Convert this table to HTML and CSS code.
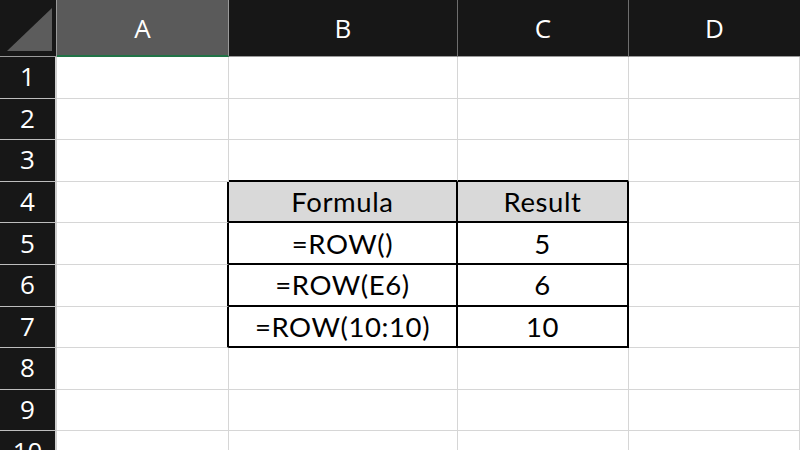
FILE: index.html
```html
<!DOCTYPE html>
<html>
<head>
<meta charset="utf-8">
<link rel="stylesheet" href="styles.css">
</head>
<body>
<div class="sheet">
  <div class="corner"><svg width="56" height="56" viewBox="0 0 56 56"><polygon points="7,51 52,8 52,51" fill="#5c5c5c"/></svg></div>
  <div class="ch sel">A</div>
  <div class="ch">B</div>
  <div class="ch">C</div>
  <div class="ch last">D</div>

  <div class="rh">1</div><div class="c"></div><div class="c"></div><div class="c"></div><div class="c"></div>
  <div class="rh">2</div><div class="c"></div><div class="c"></div><div class="c"></div><div class="c"></div>
  <div class="rh">3</div><div class="c"></div><div class="c tt"></div><div class="c tt"></div><div class="c"></div>
  <div class="rh">4</div><div class="c tl"></div><div class="c tb th">Formula</div><div class="c tb th">Result</div><div class="c"></div>
  <div class="rh">5</div><div class="c tl"></div><div class="c tb">=ROW()</div><div class="c tb">5</div><div class="c"></div>
  <div class="rh">6</div><div class="c tl"></div><div class="c tb">=ROW(E6)</div><div class="c tb">6</div><div class="c"></div>
  <div class="rh">7</div><div class="c tl"></div><div class="c tb">=ROW(10:10)</div><div class="c tb">10</div><div class="c"></div>
  <div class="rh">8</div><div class="c"></div><div class="c"></div><div class="c"></div><div class="c"></div>
  <div class="rh">9</div><div class="c"></div><div class="c"></div><div class="c"></div><div class="c"></div>
  <div class="rh">10</div><div class="c"></div><div class="c"></div><div class="c"></div><div class="c"></div>
</div>
</body>
</html>
```
FILE: styles.css
```css
html, body {
  margin: 0;
  padding: 0;
  background: #ffffff;
  overflow: hidden;
}
.sheet {
  width: 800px;
  height: 450px;
  display: grid;
  grid-template-columns: 57px 172px 229px 171px 171px;
  grid-template-rows: 57px repeat(10, 41.6px);
  overflow: hidden;
}
.sheet > div {
  box-sizing: border-box;
}
.corner {
  background: #171717;
  border-right: 1px solid #9a9a9a;
  border-bottom: 1px solid #9a9a9a;
}
.corner svg {
  display: block;
}
.ch {
  background: #171717;
  color: #ffffff;
  font-family: "Open Sans", sans-serif;
  font-size: 26px;
  display: flex;
  align-items: center;
  justify-content: center;
  border-right: 1px solid #6e6e6e;
  border-bottom: 1px solid #9a9a9a;
}
.ch.sel {
  background: #5a5a5a;
  border-bottom: 2px solid #217346;
  border-right: 1px solid #9a9a9a;
}
.ch.last {
  border-right: none;
}
.rh {
  background: #171717;
  color: #ffffff;
  font-family: "Open Sans", sans-serif;
  font-size: 26px;
  display: flex;
  align-items: center;
  justify-content: center;
  border-right: 2px solid #cfcfcf;
  border-bottom: 1px solid #bdbdbd;
  padding-bottom: 2px;
}
.c {
  border-right: 1px solid #d6d6d6;
  border-bottom: 1px solid #d6d6d6;
  font-family: Lato, "Liberation Sans", sans-serif;
  font-size: 27.5px;
  letter-spacing: 0.6px;
  color: #000000;
  display: flex;
  align-items: center;
  justify-content: center;
}
.tt {
  border-bottom: 2px solid #000000;
}
.tl {
  border-right: 2px solid #000000;
}
.tb {
  border-right: 2px solid #000000;
  border-bottom: 2px solid #000000;
}
.th {
  background: #d9d9d9;
}
```
